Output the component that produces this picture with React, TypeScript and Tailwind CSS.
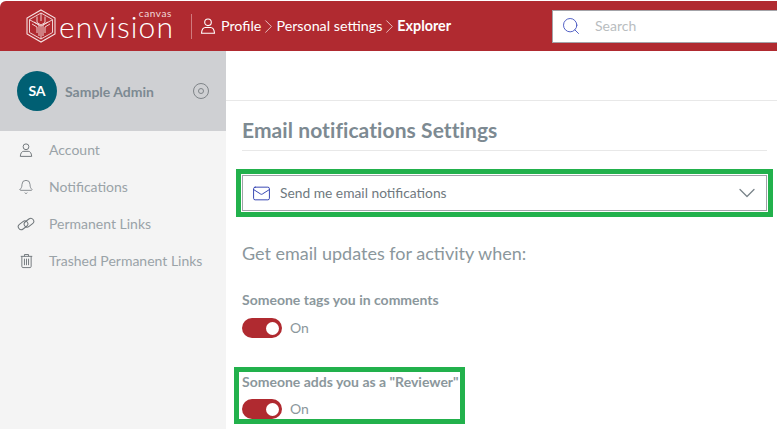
import { Bell, ChevronDown, ChevronRight, Mail, Search } from "lucide-react";

function Logo() {
  return (
    <svg width="34" height="34" viewBox="0 0 34 34" fill="none" stroke="#f6e4e4" strokeWidth="0.9" className="shrink-0">
      <path d="M17 1 31 9v16l-14 8-14-8V9Z" strokeWidth="1.1" />
      <path d="M17 4 28.500 10.500v13L17 30 5.500 23.500v-13Z" />
      <path d="M6 11l9 5v11M28 11l-9 5v11M17 4v8M13 7.500v6l4 2.500 4-2.500v-6" />
      <path d="M8 15l5 3v6M26 15l-5 3v6M10 13l7 4 7-4M17 17v13" />
    </svg>
  );
}

function UserIcon({ className }: { className?: string }) {
  return (
    <svg viewBox="0 0 16 16" fill="none" stroke="currentColor" strokeWidth="1.1" className={className}>
      <circle cx="8" cy="4.300" r="3.300" />
      <path d="M5.500 9.500h5c2.200 0 3.700 1.800 4 5.800h-13c.3-4 1.800-5.800 4-5.800Z" />
    </svg>
  );
}

function TrashIcon({ className }: { className?: string }) {
  return (
    <svg viewBox="0 0 14 16" fill="none" stroke="currentColor" strokeWidth="1" className={className}>
      <path d="M.8 3h12.400M4.800 3V1h4.400v2M2 3v10.800c0 .8.500 1.300 1.200 1.300h7.600c.7 0 1.200-.5 1.200-1.300V3" />
      <path d="M4.800 5.500v7M7 5.500v7M9.200 5.500v7" />
    </svg>
  );
}

function LinkIcon({ className }: { className?: string }) {
  return (
    <svg viewBox="0 0 18 14" fill="none" stroke="currentColor" strokeWidth="1" className={className}>
      <rect x="0.800" y="5.300" width="10.500" height="6" rx="3" transform="rotate(-38 6 8.300)" />
      <rect x="6.700" y="2.700" width="10.500" height="6" rx="3" transform="rotate(-38 12 5.700)" />
    </svg>
  );
}

function Toggle() {
  return (
    <div className="flex items-center gap-2">
      <div className="flex h-5 w-10 items-center justify-end rounded-full bg-[#b02a30] pr-[3px]">
        <div className="size-[13px] rounded-full bg-white" />
      </div>
      <span className="text-sm text-[#8b979c]">On</span>
    </div>
  );
}

export default function App() {
  return (
    <div className="h-[429px] w-[777px] overflow-hidden bg-white font-['Lato','Open_Sans',sans-serif]">
      <header className="mt-px flex h-[50px] items-center overflow-hidden rounded-tl-md bg-[#b02a30] pl-[24px] text-white whitespace-nowrap">
        <Logo />
        <div className="relative ml-px w-[113px] shrink-0">
          <span className="absolute right-0 top-0 text-[10px] leading-none tracking-[0.6px] text-[#f3dcdc]">canvas</span>
          <span className="block pb-[6px] pt-[6px] text-[30px] font-light leading-[24px] tracking-[1.1px]">envision</span>
        </div>
        <div className="ml-[19px] h-[25px] w-px shrink-0 bg-[#d07a7d]" />
        <UserIcon className="ml-[8px] size-4 shrink-0" />
        <span className="ml-[5px] text-[14.3px]">Profile</span>
        <ChevronRight className="-mx-[4px] size-[23px] shrink-0 text-[#e8c2c3]" strokeWidth={1} />
        <span className="text-[14.3px]">Personal settings</span>
        <ChevronRight className="-mx-[4px] size-[23px] shrink-0 text-[#e8c2c3]" strokeWidth={1} />
        <span className="text-[14.3px] font-bold">Explorer</span>
        <div className="ml-[101px] flex h-[33px] w-[240px] shrink-0 items-center border border-[#a3a3a8] bg-white pl-[8px]">
          <Search className="size-[20px] text-[#4352c0]" strokeWidth={1.1} />
          <span className="ml-[14px] text-sm text-[#b9bdbf]">Search</span>
        </div>
      </header>

      <div className="flex h-[378px]">
        <aside className="w-[226px] shrink-0 bg-[#f4f4f4]">
          <div className="flex h-[80px] items-center bg-[#cfd0d3] pl-[17px] pr-[17px]">
            <div className="flex size-10 items-center justify-center rounded-full bg-[#005f73] text-sm font-bold text-white">SA</div>
            <span className="ml-2 pt-[2px] text-sm font-bold text-[#7d8a92]">Sample Admin</span>
            <div className="ml-auto flex size-4 items-center justify-center rounded-full border border-[#7f8488]">
              <div className="size-[6px] rounded-full border border-[#7f8488]" />
            </div>
          </div>
          <nav className="flex flex-col text-sm text-[#9aa3a8]">
            <div className="flex h-[37px] items-center pl-[19px]">
              <UserIcon className="size-[14px] text-[#6d7478]" />
              <span className="ml-4">Account</span>
            </div>
            <div className="flex h-[37px] items-center pl-[18px]">
              <Bell className="size-4 text-[#6d7478]" strokeWidth={1.2} />
              <span className="ml-[15px]">Notifications</span>
            </div>
            <div className="flex h-[37px] items-center pl-[17px]">
              <LinkIcon className="h-[14px] w-[18px] text-[#6d7478]" />
              <span className="ml-[14px]">Permanent Links</span>
            </div>
            <div className="flex h-[37px] items-center pl-[20px]">
              <TrashIcon className="h-4 w-[13px] text-[#6d7478]" />
              <span className="ml-4">Trashed Permanent Links</span>
            </div>
          </nav>
        </aside>

        <main className="min-w-0 flex-1">
          <div className="h-[50px] border-b border-[#e8e8e8]" />
          <div className="pl-[16px] pr-[10px]">
            <h1 className="border-b border-[#e8e8e8] pb-[7px] pt-[16px] text-[21px] font-bold leading-[26px] tracking-[0.08px] text-[#7d8a92]">
              Email notifications Settings
            </h1>
            <div className="relative mt-[24px] flex h-[36px] items-center border border-[#a0a1a8] pl-[9px] pr-[5px]">
              <Mail className="size-[19px] text-[#3040b0]" strokeWidth={1.2} />
              <span className="ml-[9px] text-[13.8px] text-[#6f7980]">Send me email notifications</span>
              <ChevronDown className="ml-auto size-[28px] text-[#7a848a]" strokeWidth={1.1} />
              <div className="pointer-events-none absolute -inset-[7px] border-[5px] border-[#22b14c]" />
            </div>
            <p className="mt-[30px] text-[18px] leading-[24px] text-[#8b979c]">Get email updates for activity when:</p>
            <p className="mt-[26px] text-sm font-bold leading-[18px] text-[#8b979c]">Someone tags you in comments</p>
            <div className="mt-[9px]"><Toggle /></div>
            <div className="relative mt-[35px]">
              <p className="text-sm font-bold leading-[18px] text-[#8b979c]">Someone adds you as a "Reviewer"</p>
              <div className="mt-[8px]"><Toggle /></div>
              <div className="pointer-events-none absolute -left-[8px] -top-[6px] h-[57px] w-[231px] border-[5px] border-[#22b14c]" />
            </div>
          </div>
        </main>
      </div>
    </div>
  );
}
